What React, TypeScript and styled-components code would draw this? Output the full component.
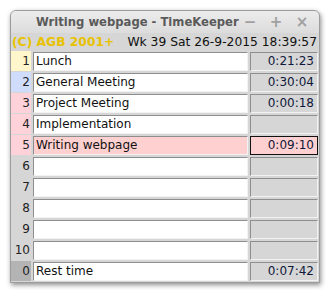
import React from 'react';
import styled, { createGlobalStyle } from 'styled-components';

const GlobalStyle = createGlobalStyle`
	html, body {
		margin: 0;
		padding: 0;
		background: #ffffff;
	}
	body {
		font-family: 'DejaVu Sans', Verdana, sans-serif;
	}
`;

const Page = styled.div`
	width: 329px;
	height: 292px;
	padding: 10px 0 0 10px;
	box-sizing: border-box;
`;

const Window = styled.div`
	width: 310px;
	height: 273px;
	box-sizing: border-box;
	background: #d6d6d6;
	border: 1px solid #9c9c9c;
	border-radius: 6px 6px 0 0;
	box-shadow: 1px 2px 5px rgba(0, 0, 0, 0.45);
	display: flex;
	flex-direction: column;
	overflow: hidden;
`;

const TitleBar = styled.div`
	height: 22px;
	display: flex;
	align-items: center;
	background: linear-gradient(#ececec, #dcdcdc);
	padding: 0 10px 0 25px;
`;

const Title = styled.div`
	flex: 1;
	font-size: 11.6px;
	font-weight: bold;
	color: #5a5a5a;
	white-space: nowrap;
`;

const WinButtons = styled.div`
	display: flex;
	gap: 12px;
	color: #a0a0a0;
	font-size: 15px;
	font-weight: bold;
`;

const WinButton = styled.span`
	width: 14px;
	text-align: center;
`;

const InfoBar = styled.div`
	height: 18px;
	display: flex;
	align-items: center;
	justify-content: space-between;
	padding: 0 2px 0 1px;
	font-size: 12.3px;
	white-space: nowrap;
`;

const Copyright = styled.span`
	color: #e8c200;
	font-weight: bold;
`;

const Clock = styled.span`
	color: #111;
`;

const Rows = styled.div`
	display: flex;
	flex-direction: column;
	gap: 1px;
`;

const Row = styled.div`
	display: grid;
	grid-template-columns: 18px 1fr 68px;
	column-gap: 2px;
	height: 20px;
	padding-right: 1px;
`;

const Num = styled.div<{ $bg: string }>`
	background: ${(p) => p.$bg};
	font-size: 12px;
	color: #222;
	text-align: right;
	line-height: 20px;
	padding-right: 1px;
	margin-right: -2px;
`;

const Field = styled.div<{ $bg: string; $focus?: boolean }>`
	margin-top: 1px;
	height: 19px;
	box-sizing: border-box;
	background: ${(p) => p.$bg};
	border: 1px solid;
	border-color: ${(p) => (p.$focus ? '#111' : '#8e8e8e #f2f2f2 #f2f2f2 #8e8e8e')};
	font-size: 12px;
	line-height: 17px;
	padding: 0 3px 0 2px;
	color: #111;
	white-space: nowrap;
	overflow: hidden;
`;

const NameField = styled(Field)`
	margin-left: 2px;
`;

const TimeField = styled(Field)`
	text-align: right;
	color: #10183a;
`;

type Task = { n: string; name: string; time: string; bg: string; sel?: boolean };

const tasks: Task[] = [
	{ n: '1', name: 'Lunch', time: '0:21:23', bg: '#fff6cc' },
	{ n: '2', name: 'General Meeting', time: '0:30:04', bg: '#cfdcfb' },
	{ n: '3', name: 'Project Meeting', time: '0:00:18', bg: '#ffd2da' },
	{ n: '4', name: 'Implementation', time: '', bg: '#ffd2da' },
	{ n: '5', name: 'Writing webpage', time: '0:09:10', bg: '#ffd2da', sel: true },
	{ n: '6', name: '', time: '', bg: '#d6d6d6' },
	{ n: '7', name: '', time: '', bg: '#d6d6d6' },
	{ n: '8', name: '', time: '', bg: '#d6d6d6' },
	{ n: '9', name: '', time: '', bg: '#d6d6d6' },
	{ n: '10', name: '', time: '', bg: '#d6d6d6' },
	{ n: '0', name: 'Rest time', time: '0:07:42', bg: '#b4b4b4' },
];

const App = () => {
	return (
		<Page>
			<GlobalStyle />
			<Window>
				<TitleBar>
					<Title>Writing webpage - TimeKeeper</Title>
					<WinButtons>
						<WinButton>−</WinButton>
						<WinButton>+</WinButton>
						<WinButton>×</WinButton>
					</WinButtons>
				</TitleBar>
				<InfoBar>
					<Copyright>(C) AGB 2001+</Copyright>
					<Clock>Wk 39 Sat 26-9-2015 18:39:57</Clock>
				</InfoBar>
				<Rows>
					{tasks.map((t) => (
						<Row key={t.n}>
							<Num $bg={t.bg}>{t.n}</Num>
							<NameField $bg={t.sel ? '#ffd0d0' : '#ffffff'}>{t.name}</NameField>
							<TimeField $bg={t.sel ? '#ffd0d0' : '#d6d6d6'} $focus={t.sel}>
								{t.time}
							</TimeField>
						</Row>
					))}
				</Rows>
			</Window>
		</Page>
	);
};

export default App;
